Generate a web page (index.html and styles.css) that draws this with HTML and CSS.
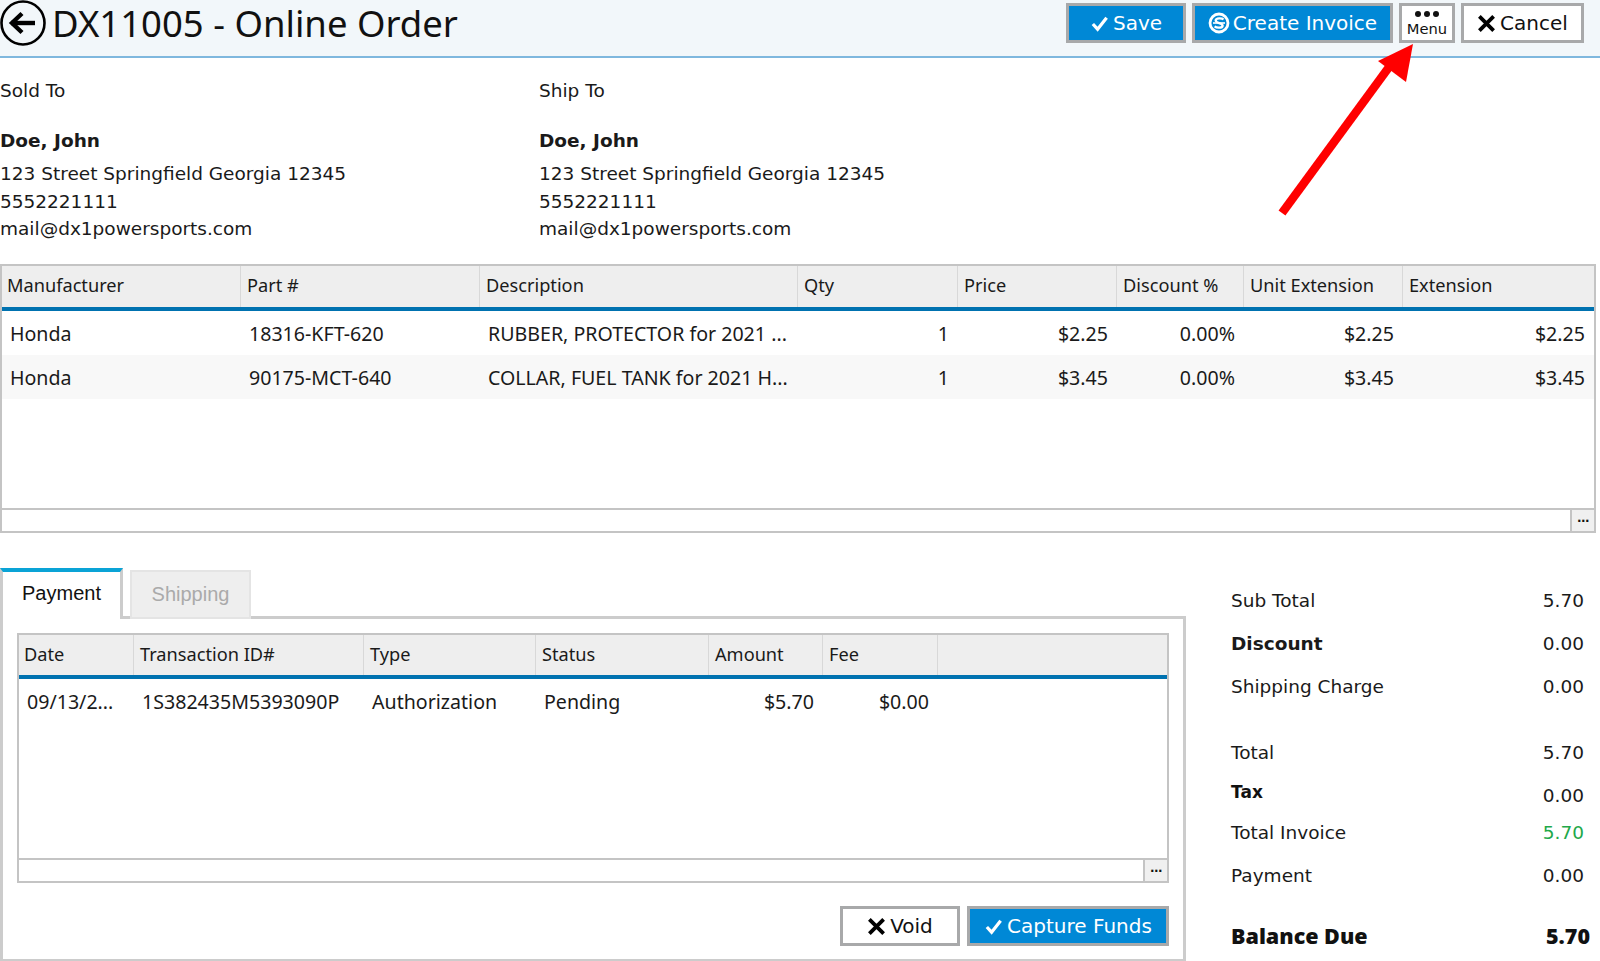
FILE: index.html
```html
<!DOCTYPE html>
<html lang="en">
<head>
<meta charset="utf-8">
<title>DX11005 - Online Order</title>
<link rel="stylesheet" href="styles.css">
</head>
<body>
<header class="topbar">
  <div class="title-wrap">
    <svg class="back" viewBox="0 0 46 46"><circle cx="23" cy="23" r="21.5" fill="none" stroke="#000" stroke-width="2.6"/><path d="M11 23H35" stroke="#000" stroke-width="4.4" fill="none"/><path d="M22 13.5 12 23l10 9.5" stroke="#000" stroke-width="4.4" fill="none"/></svg>
    <h1 class="title">DX11005 - Online Order</h1>
  </div>
  <div class="actions">
    <button class="btn primary btn-save"><svg class="ic" viewBox="0 0 20 20"><path d="M3 10.5l5 5.5L17.5 4" fill="none" stroke="#fff" stroke-width="3.4"/></svg>Save</button>
    <button class="btn primary btn-invoice"><svg class="ic ic-s" viewBox="0 0 22 22"><circle cx="11" cy="11" r="9" fill="none" stroke="#fff" stroke-width="2.8"/><path d="M15.5 7.5C14 6 8 5.8 7.7 8.5S15 11 14.6 13.7 8.5 16 6.6 14.4" fill="none" stroke="#fff" stroke-width="2.4"/><path d="M5 11h12" fill="none" stroke="#fff" stroke-width="1.6"/></svg>Create Invoice</button>
    <button class="btn btn-menu"><span class="dots"><i></i><i></i><i></i></span><span class="menu-label">Menu</span></button>
    <button class="btn btn-cancel"><svg class="ic ic-x" viewBox="0 0 20 20"><path d="M2.5 2.5l15 15M17.5 2.5l-15 15" fill="none" stroke="#000" stroke-width="4"/></svg>Cancel</button>
  </div>
</header>

<section class="addresses">
  <div class="address">
    <div class="addr-label">Sold To</div>
    <div class="addr-name">Doe, John</div>
    <div class="addr-line">123 Street Springfield Georgia 12345</div>
    <div class="addr-line">5552221111</div>
    <div class="addr-line">mail@dx1powersports.com</div>
  </div>
  <div class="address">
    <div class="addr-label">Ship To</div>
    <div class="addr-name">Doe, John</div>
    <div class="addr-line">123 Street Springfield Georgia 12345</div>
    <div class="addr-line">5552221111</div>
    <div class="addr-line">mail@dx1powersports.com</div>
  </div>
</section>

<section class="grid grid-items">
  <div class="grid-row head">
    <div>Manufacturer</div><div>Part #</div><div>Description</div><div>Qty</div><div>Price</div><div>Discount %</div><div>Unit Extension</div><div>Extension</div>
  </div>
  <div class="grid-body">
    <div class="grid-row">
      <div>Honda</div><div>18316-KFT-620</div><div>RUBBER, PROTECTOR for 2021 ...</div><div class="num">1</div><div class="num">$2.25</div><div class="num">0.00%</div><div class="num">$2.25</div><div class="num">$2.25</div>
    </div>
    <div class="grid-row alt">
      <div>Honda</div><div>90175-MCT-640</div><div>COLLAR, FUEL TANK for 2021 H...</div><div class="num">1</div><div class="num">$3.45</div><div class="num">0.00%</div><div class="num">$3.45</div><div class="num">$3.45</div>
    </div>
  </div>
  <div class="grid-foot"><span class="more">...</span></div>
</section>

<section class="lower">
  <div class="tabs-col">
    <div class="tabs">
      <div class="tab active">Payment</div>
      <div class="tab">Shipping</div>
    </div>
    <div class="panel">
      <div class="grid grid-pay">
        <div class="grid-row head">
          <div>Date</div><div>Transaction ID#</div><div>Type</div><div>Status</div><div>Amount</div><div>Fee</div><div></div>
        </div>
        <div class="grid-body">
          <div class="grid-row">
            <div>09/13/2...</div><div>1S382435M5393090P</div><div>Authorization</div><div>Pending</div><div class="num">$5.70</div><div class="num">$0.00</div><div></div>
          </div>
        </div>
        <div class="grid-foot"><span class="more">...</span></div>
      </div>
      <div class="panel-actions">
        <button class="btn btn-void"><svg class="ic ic-x" viewBox="0 0 20 20"><path d="M2.5 2.5l15 15M17.5 2.5l-15 15" fill="none" stroke="#000" stroke-width="4"/></svg>Void</button>
        <button class="btn primary btn-capture"><svg class="ic" viewBox="0 0 20 20"><path d="M3 10.5l5 5.5L17.5 4" fill="none" stroke="#fff" stroke-width="3.4"/></svg>Capture Funds</button>
      </div>
    </div>
  </div>
  <aside class="summary">
    <div class="sum-row r1"><span>Sub Total</span><span>5.70</span></div>
    <div class="sum-row r2"><b>Discount</b><span>0.00</span></div>
    <div class="sum-row r3"><span>Shipping Charge</span><span>0.00</span></div>
    <div class="sum-row r4"><span>Total</span><span>5.70</span></div>
    <div class="sum-row r5"><b class="tax">Tax</b><span>0.00</span></div>
    <div class="sum-row r6"><span>Total Invoice</span><span class="green">5.70</span></div>
    <div class="sum-row r7"><span>Payment</span><span>0.00</span></div>
    <div class="sum-row r8 due"><b>Balance Due</b><b>5.70</b></div>
  </aside>
</section>

<svg class="arrow" viewBox="0 0 1600 961"><path d="M1282 213 1392 63" stroke="#ff0000" stroke-width="8.5" fill="none"/><path d="M1413 44 1378 61 1406 82Z" fill="#ff0000"/></svg>
</body>
</html>
```
FILE: styles.css
```css
* { box-sizing: border-box; }
html, body { margin: 0; padding: 0; height: 961px; overflow: hidden; background: #fff; }
body { font-family: "DejaVu Sans", sans-serif; font-size: 18.5px; color: #1a1a1a; position: relative; }

.topbar { height: 58px; background: #f2f7fa; border-bottom: 2px solid #7fb8de; display: flex; justify-content: space-between; padding: 0 16px 0 0; }
.title-wrap { display: flex; align-items: flex-start; }
.back { width: 46px; height: 46px; margin-right: 6px; display: block; }
.title { margin: 0; font: 400 36.5px/47px "Noto Sans", sans-serif; color: #111; }
.actions { display: flex; gap: 6px; padding-top: 3px; }

.btn { height: 40px; border: 3px solid #a8a9aa; background: #fff; color: #111; font: 400 20px "DejaVu Sans", sans-serif; display: flex; align-items: center; justify-content: center; padding: 0; }
.btn.primary { background: #0088d6; color: #fff; }
.ic { width: 19px; height: 19px; margin-right: 4px; flex: none; }
.ic-s { width: 22px; height: 22px; margin-right: 3px; }
.btn-save { width: 120px; }
.btn-invoice { width: 201px; }
.btn-menu { width: 56px; flex-direction: column; font-size: 14.7px; }
.btn-cancel { width: 123px; }
.dots { display: flex; gap: 3px; height: 8px; }
.dots i { width: 6px; height: 6px; border-radius: 50%; background: #111; display: block; }
.menu-label { line-height: 15px; margin-top: 2px; }

.addresses { display: grid; grid-template-columns: 539px 1fr; padding-top: 19px; height: 206px; }
.addr-label { line-height: 28px; margin-bottom: 22px; }
.addr-name { font-weight: 700; line-height: 28px; margin-bottom: 5px; }
.addr-line { line-height: 27.5px; }

.grid { border: 2px solid #c4c4c4; display: flex; flex-direction: column; font-family: "Noto Sans", sans-serif; font-size: 19.6px; color: #1a1a1a; }
.grid-items { width: 1596px; height: 269px; }
.grid-body { flex: 1; }
.grid-row { display: grid; }
.grid-items .grid-row { grid-template-columns: 239px 239px 318px 160px 159px 127px 159px 1fr; }
.grid-pay .grid-row { grid-template-columns: 115px 230px 172px 173px 114px 115px 1fr; }
.grid-row > div { padding: 0 8px; height: 44px; line-height: 46px; white-space: nowrap; overflow: hidden; }
.grid-row > .num { text-align: right; padding-right: 9px; }
.alt { background: #f8f8f8; }
.grid-row.head { height: 45px; background: #eee; border-bottom: 4px solid #0072b0; font-size: 18.2px; }
.grid-pay .grid-row.head { height: 44px; }
.grid-row.head > div { height: auto; border-right: 1px solid #d8d8d8; padding: 0 6px; line-height: 38px; }
.grid-row.head > div:first-child { padding-left: 5px; }
.grid-row.head > div:last-child { border-right: 0; }
.grid-foot { height: 23px; border-top: 2px solid #c4c4c4; display: flex; justify-content: flex-end; flex: none; }
.more { width: 24px; background: #f0f0f0; border-left: 2px solid #c4c4c4; font: 700 12px/17px "DejaVu Sans", sans-serif; text-align: center; color: #111; letter-spacing: -.6px; }

.lower { display: flex; padding-top: 35px; }
.tabs-col { width: 1186px; flex: none; }
.tabs { display: flex; gap: 7px; height: 51px; align-items: flex-start; position: relative; z-index: 1; }
.tab { font: 400 20px "Liberation Sans", Arial, sans-serif; }
.tab.active { width: 123px; height: 51px; border-top: 4px solid #0aa3d6; border-left: 3px solid #ccc; border-right: 3px solid #ccc; background: #fff; text-align: center; line-height: 43px; color: #111; }
.tab:not(.active) { width: 121px; height: 49px; margin-top: 2px; background: #eee; border: 2px solid #e4e4e4; text-align: center; line-height: 45px; color: #aaa; }
.panel { height: 346px; margin-top: -3px; border: 3px solid #ccc; padding: 14px 14px 0; }
.grid-pay { height: 250px; width: 1152px; }
.panel-actions { display: flex; justify-content: flex-end; gap: 7px; margin-top: 23px; }
.btn-void { width: 120px; }
.btn-capture { width: 202px; }

.summary { width: 414px; padding: 0 16px 0 45px; position: relative; font-size: 18.5px; }
.sum-row { display: flex; justify-content: space-between; line-height: 26px; height: 26px; }
.r1 { margin-top: 20px; }
.r2 { margin-top: 17px; }
.r3 { margin-top: 17px; }
.r4 { margin-top: 40px; }
.r5 { margin-top: 17px; }
.r6 { margin-top: 11px; }
.r7 { margin-top: 17px; }
.r8 { margin-top: 34px; margin-right: -6px; font: 700 21.5px/26px "Noto Sans", sans-serif; color: #111; }
.r5 .tax { font-size: 17px; position: relative; top: -4px; color: #111; }
.green { color: #22a84a; }

.arrow { position: absolute; left: 0; top: 0; width: 1600px; height: 961px; pointer-events: none; }
```
